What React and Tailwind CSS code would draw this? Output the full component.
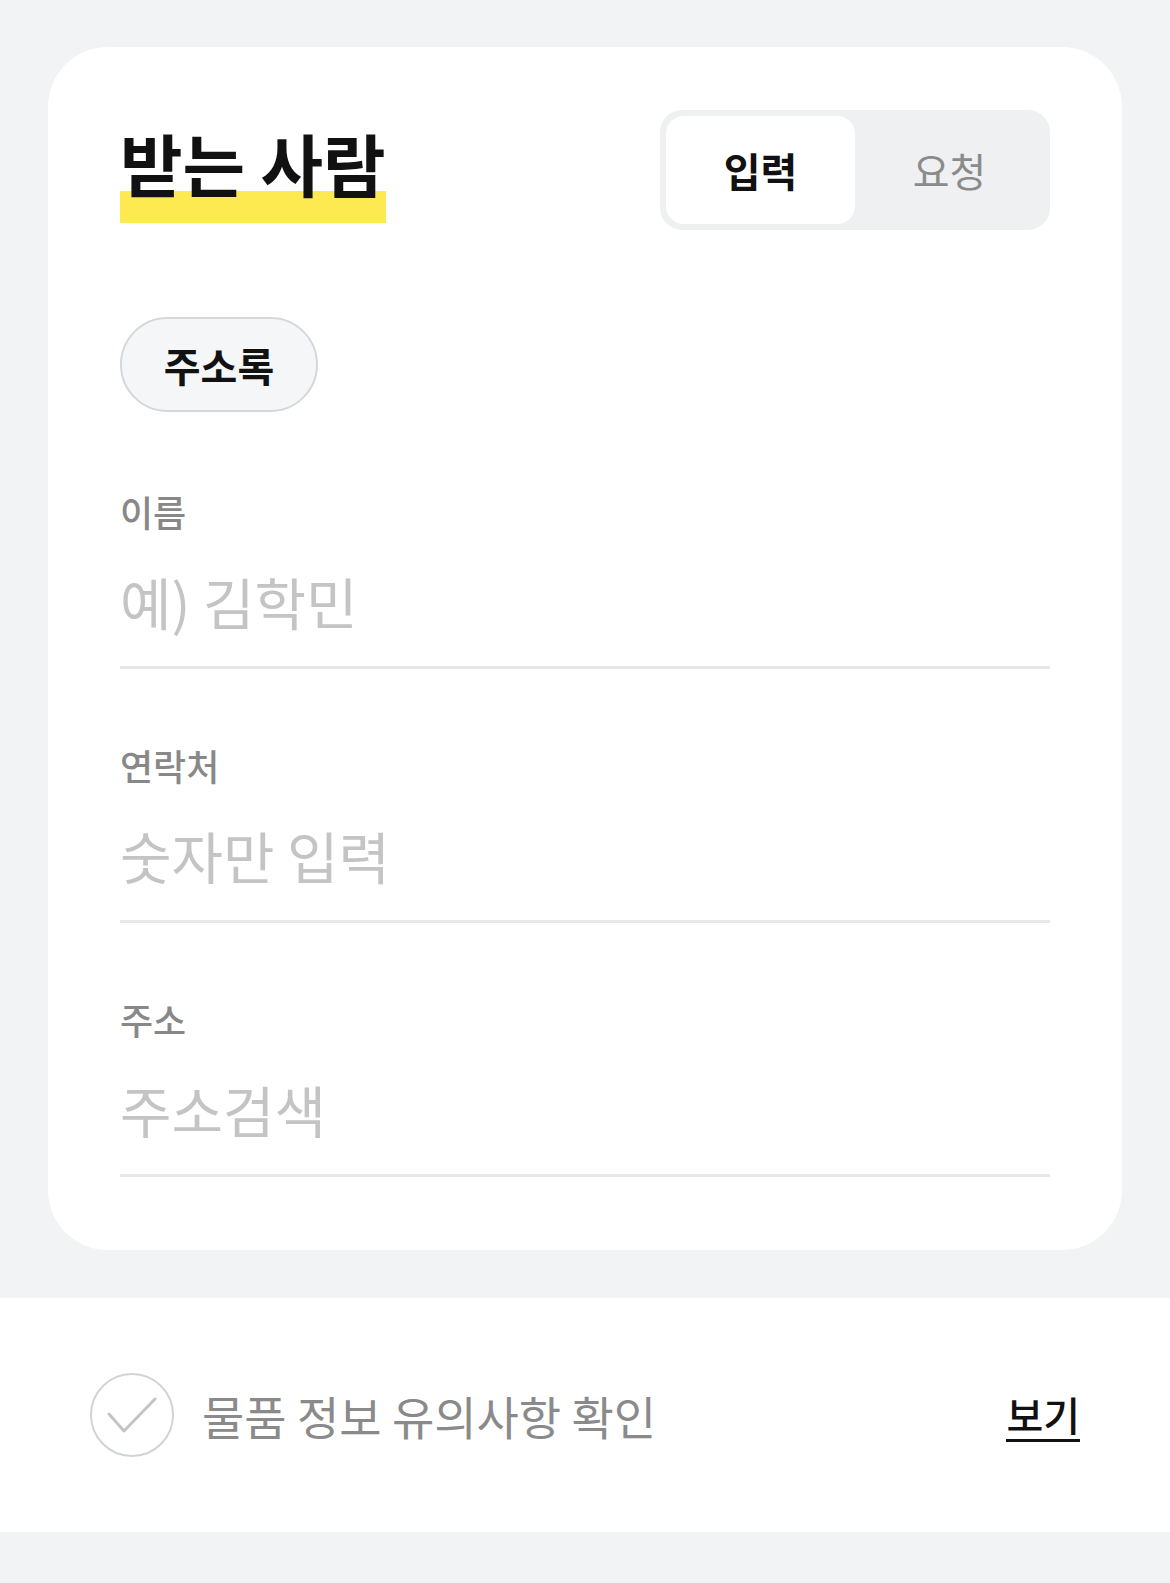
import React, { useState } from 'react';

const fields = [
  { label: '이름', placeholder: '예) 김학민' },
  { label: '연락처', placeholder: '숫자만 입력' },
  { label: '주소', placeholder: '주소검색' },
];

export default function App() {
  const [mode, setMode] = useState('input'); // input, request

  return (
    <div className="min-h-[1583px] bg-[#f2f3f5] pt-[47px] font-['Noto_Sans_CJK_KR',sans-serif]">
      {/* Recipient card */}
      <div className="mx-[48px] rounded-[60px] bg-white px-[72px] pt-[63px] pb-[73px]">
        <div className="flex items-center justify-between">
          <h2 className="mt-[8px] inline-block bg-[linear-gradient(transparent_67%,#fcea50_67%)] pb-[23px] text-[68px] leading-[74px] font-bold text-[#111]">
            받는 사람
          </h2>

          {/* Input / request toggle */}
          <div className="grid h-[120px] w-[390px] grid-cols-2 rounded-[22px] bg-[#eff0f2] p-[6px]">
            <button
              onClick={() => setMode('input')}
              className={`rounded-[18px] text-[40px] ${
                mode === 'input' ? 'bg-white font-bold text-[#111]' : 'text-[#8b8b8b]'
              }`}
            >
              입력
            </button>
            <button
              onClick={() => setMode('request')}
              className={`rounded-[18px] text-[40px] ${
                mode === 'request' ? 'bg-white font-bold text-[#111]' : 'text-[#8b8b8b]'
              }`}
            >
              요청
            </button>
          </div>
        </div>

        <button className="mt-[87px] h-[95px] w-[198px] rounded-full border-2 border-[#d4d7db] bg-[#f5f6f8] text-[40px] font-bold text-[#111]">
          주소록
        </button>

        {fields.map((f, idx) => (
          <div key={f.label} className={idx === 0 ? 'mt-[79px]' : 'mt-[76px]'}>
            <label className="block text-[36px] leading-[40px] font-medium text-[#888]">{f.label}</label>
            <input
              placeholder={f.placeholder}
              className="mt-[38px] block w-full border-b-[3px] border-[#e6e7e9] pb-[33px] text-[56px] leading-[64px] text-[#111] outline-none placeholder:text-[#c4c4c4]"
            />
          </div>
        ))}
      </div>

      {/* Notice confirmation row */}
      <div className="mt-[48px] flex h-[234px] items-center justify-between bg-white px-[90px]">
        <div className="flex items-center gap-[28px]">
          <span className="flex h-[84px] w-[84px] items-center justify-center rounded-full border-2 border-[#d0d4d9]">
            <svg width="50" height="36" viewBox="0 0 50 36" fill="none">
              <path d="M2 17 L17 34 L48 2" stroke="#c4c4c4" strokeWidth="3" strokeLinecap="round" strokeLinejoin="round" />
            </svg>
          </span>
          <span className="text-[46px] text-[#8a8a8a]">물품 정보 유의사항 확인</span>
        </div>
        <span className="border-b-[3px] border-[#111] text-[40px] leading-[50px] font-medium text-[#111]">보기</span>
      </div>
    </div>
  );
}
